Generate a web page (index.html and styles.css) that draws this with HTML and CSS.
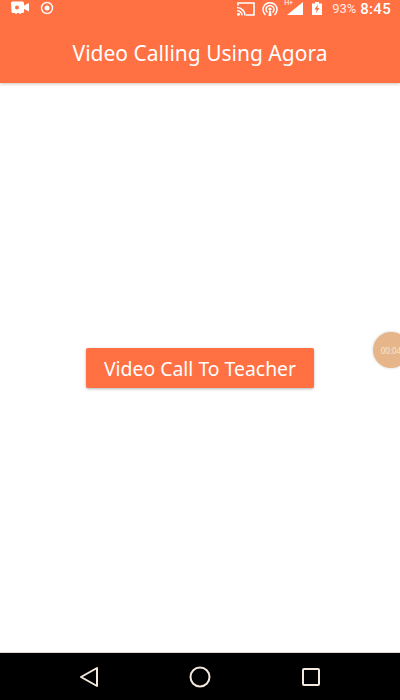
FILE: index.html
```html
<!DOCTYPE html>
<html lang="en">
<head>
    <meta charset="UTF-8">
    <meta name="viewport" content="width=device-width, initial-scale=1.0">
    <title>Video Calling Using Agora</title>
    <link rel="stylesheet" href="styles.css">
</head>
<body>
    <header class="app-header">
        <div class="status-bar">
            <div class="status-left">
                <svg class="icon-video" width="20" height="15" viewBox="0 0 20 15">
                    <path fill="#fff" d="M1 2a1.500 1.500 0 0 1 1.500-1.500h10a1.500 1.500 0 0 1 1.500 1.500v2.500l5-2.500v8.500l-5-2.500v2.500a1.500 1.500 0 0 1-1.500 1.500h-1.500l-1 1.500-1-1.500h-2l-1 1.500-1-1.500h-2a1.500 1.500 0 0 1-1.500-1.500z"/>
                    <circle cx="7" cy="6.500" r="2" fill="#ff7043"/>
                </svg>
                <svg class="icon-record" width="14" height="14" viewBox="0 0 14 14">
                    <circle cx="7" cy="7" r="5.500" fill="none" stroke="#fff" stroke-width="1.400"/>
                    <circle cx="7" cy="7" r="2.500" fill="#fff"/>
                </svg>
            </div>
            <div class="status-right">
                <svg class="icon-cast" width="18" height="14" viewBox="0 0 18 14">
                    <path fill="none" stroke="#fff" stroke-width="1.600" d="M1 3.500V1h16v12H9"/>
                    <path fill="none" stroke="#fff" stroke-width="1.600" d="M0 5.500a8 8 0 0 1 8 8M0 8.500a5 5 0 0 1 5 5"/>
                    <circle cx="1.500" cy="12.300" r="1.500" fill="#fff"/>
                </svg>
                <svg class="icon-hotspot" width="16" height="14" viewBox="0 0 16 14">
                    <path fill="none" stroke="#fff" stroke-width="1.500" d="M3.500 13a7 7 0 1 1 9 0M5.500 10.500a4 4 0 1 1 5 0"/>
                    <circle cx="8" cy="7" r="1.600" fill="#fff"/>
                    <path fill="#fff" d="M7 9h2l.5 5h-3z"/>
                </svg>
                <span class="signal">
                    <span class="signal-type">H+</span>
                    <svg width="16" height="13" viewBox="0 0 16 13">
                        <path fill="#fff" d="M16 0v13H0z"/>
                    </svg>
                </span>
                <svg class="icon-battery" width="10" height="13" viewBox="0 0 10 13">
                    <path fill="#fff" d="M3 0h4v1.500h3V13H0V1.500h3z"/>
                    <path fill="#ff7043" d="M5.800 2.500 2.500 7.500h2L4 11l3.500-5h-2z"/>
                </svg>
                <span class="battery-level">93%</span>
                <span class="clock">8:45</span>
            </div>
        </div>
        <h1 class="app-title">Video Calling Using Agora</h1>
    </header>

    <main class="content">
        <button class="call-button">Video Call To Teacher</button>
    </main>

    <div class="call-bubble"><span>00:04</span></div>

    <nav class="nav-bar">
        <svg width="20" height="22" viewBox="0 0 20 22">
            <path fill="none" stroke="#f3e9df" stroke-width="2" stroke-linejoin="round" d="M18 2v18L2 11z"/>
        </svg>
        <svg width="22" height="22" viewBox="0 0 22 22">
            <circle cx="11" cy="11" r="9.500" fill="none" stroke="#f3e9df" stroke-width="2"/>
        </svg>
        <svg width="20" height="20" viewBox="0 0 20 20">
            <rect x="2" y="2" width="16" height="16" rx="1" fill="none" stroke="#f3e9df" stroke-width="2"/>
        </svg>
    </nav>
</body>
</html>
```

FILE: styles.css
```css
* {
    box-sizing: border-box;
}
html, body {
    height: 100%;
}
body {
    margin: 0;
    display: flex;
    flex-direction: column;
    position: relative;
    overflow: hidden;
    background-color: #fff;
    color: #fff;
    font-family: "Noto Sans", "Open Sans", sans-serif;
}
.app-header {
    height: 83px;
    background-color: #ff7043;
    box-shadow: 0 1px 3px rgba(120, 80, 40, 0.35);
    z-index: 1;
}
.status-bar {
    height: 24px;
    padding: 0 9px 7px 10px;
    display: flex;
    justify-content: space-between;
    align-items: center;
}
.status-left, .status-right {
    display: flex;
    align-items: center;
}
.status-left {
    gap: 10px;
}
.icon-record {
    margin-bottom: 1px;
}
.icon-cast {
    margin-right: 7px;
}
.icon-hotspot {
    margin-right: 9px;
}
.icon-battery {
    margin-left: 9px;
}
.signal {
    position: relative;
    display: flex;
}
.signal-type {
    position: absolute;
    left: -3px;
    top: -2px;
    font-size: 7px;
    line-height: 7px;
    font-family: Roboto, sans-serif;
}
.battery-level {
    margin-left: 10px;
    font-family: Roboto, sans-serif;
    font-size: 13px;
    opacity: 0.85;
}
.clock {
    font-family: Roboto, sans-serif;
    font-size: 15px;
    font-weight: 500;
    letter-spacing: 0.3px;
    margin-left: 4px;
}
.app-title {
    margin: 0;
    height: 59px;
    display: flex;
    align-items: center;
    justify-content: center;
    font-size: 21px;
    font-weight: 400;
    padding-bottom: 1px;
}
.content {
    flex: 1;
    display: flex;
    align-items: center;
    justify-content: center;
}
.call-button {
    width: 228px;
    height: 40px;
    border: 0;
    border-radius: 2px;
    background-color: #ff7043;
    box-shadow: 0 1px 3px rgba(0, 0, 0, 0.3);
    color: #fff;
    font-family: inherit;
    font-size: 19.4px;
    padding: 1px 0 0;
}
.call-bubble {
    position: absolute;
    left: 373px;
    top: 332px;
    width: 36px;
    height: 36px;
    border-radius: 50%;
    background-color: #e6b68a;
    box-shadow: 0 0 3px rgba(0, 0, 0, 0.2);
    display: flex;
    align-items: center;
    justify-content: center;
    font-size: 8px;
    color: #f6e6d6;
}
.nav-bar {
    height: 48px;
    background-color: #000;
    border-top: 1px solid #ddd5cd;
    display: flex;
    align-items: center;
    justify-content: space-between;
    padding: 0 79px;
}
```
